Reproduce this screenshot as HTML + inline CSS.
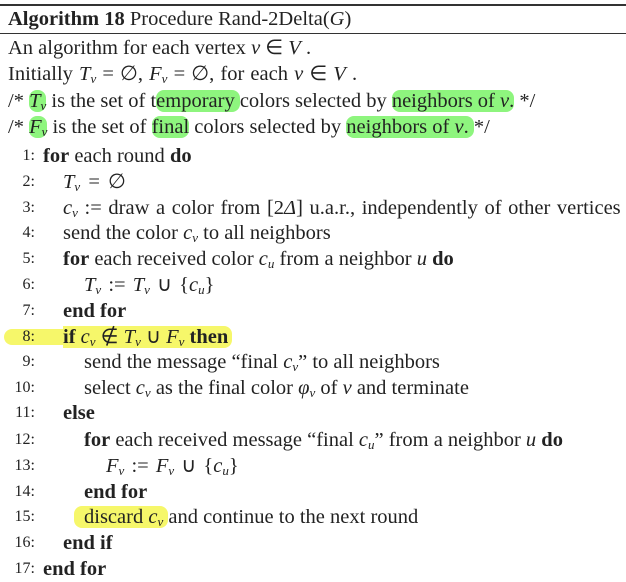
<!DOCTYPE html>
<html><head><meta charset="utf-8"><style>
body{margin:0;width:626px;height:582px;background:#fff;position:relative;overflow:hidden;font-family:"Liberation Serif",serif;font-size:20.5px;color:#222}
.l{position:absolute;height:26px;line-height:26px;white-space:nowrap}
.n{position:absolute;height:26px;line-height:26px;width:35px;text-align:right;font-size:16px;left:0}
i{font-style:italic}
b{font-weight:bold}
sub{font-size:13px;vertical-align:-3px;font-style:italic;line-height:0}
.hr{position:absolute;left:0;width:626px;background:#333}
.g{background:#8ef57e;border-radius:8px}
.y{background:#f6f76a;border-radius:8px}
.yb{position:absolute;background:#f6f76a;border-radius:8px 0 0 8px}
</style></head><body>
<div class="hr" style="top:4px;height:2px"></div>
<div class="hr" style="top:33px;height:1px"></div>
<div class="yb" style="left:4px;top:329px;width:60px;height:16px"></div>
<div class="l" style="left:8px;top:6px"><b>Algorithm 18</b> Procedure Rand-2Delta(<i>G</i>)</div>
<div class="l" style="left:8px;top:35px">An algorithm for each vertex <i>v</i> ∈ <i>V</i> .</div>
<div class="l" style="left:8px;top:61px;word-spacing:1px">Initially <i>T</i><sub>v</sub> = ∅, <i>F</i><sub>v</sub> = ∅, for each <i>v</i> ∈ <i>V</i> .</div>
<div class="l" style="left:8px;top:88px">/* <span class="g"><i>T</i><sub>v</sub></span> is the set of t<span class="g">emporary </span>colors selected by <span class="g">neighbors of <i>v</i>.</span> */</div>
<div class="l" style="left:8px;top:114px">/* <span class="g"><i>F</i><sub>v</sub></span> is the set of <span class="g">final</span> colors selected by <span class="g">neighbors of <i>v</i>. </span>*/</div>

<div class="n" style="top:143px">1:</div><div class="l" style="left:43px;top:143px"><b>for</b> each round <b>do</b></div>
<div class="n" style="top:169px">2:</div><div class="l" style="left:63px;top:169px;word-spacing:3px"><i>T</i><sub>v</sub> = ∅</div>
<div class="n" style="top:195px">3:</div><div class="l" style="left:63px;top:195px;word-spacing:1.5px"><i>c</i><sub>v</sub> := draw a color from [2<i>Δ</i>] u.a.r., independently of other vertices</div>
<div class="n" style="top:220px">4:</div><div class="l" style="left:63px;top:220px">send the color <i>c</i><sub>v</sub> to all neighbors</div>
<div class="n" style="top:246px">5:</div><div class="l" style="left:63px;top:246px"><b>for</b> each received color <i>c</i><sub>u</sub> from a neighbor <i>u</i> <b>do</b></div>
<div class="n" style="top:272px">6:</div><div class="l" style="left:84px;top:272px;word-spacing:2px"><i>T</i><sub>v</sub> := <i>T</i><sub>v</sub> ∪ {<i>c</i><sub>u</sub>}</div>
<div class="n" style="top:298px">7:</div><div class="l" style="left:63px;top:298px"><b>end for</b></div>
<div class="n" style="top:324px">8:</div><div class="l" style="left:63px;top:324px"><span class="y" style="border-radius:0 8px 8px 0;padding-right:4px"><b>if</b> <i>c</i><sub>v</sub> ∉ <i>T</i><sub>v</sub> ∪ <i>F</i><sub>v</sub> <b>then</b></span></div>
<div class="n" style="top:349px">9:</div><div class="l" style="left:84px;top:349px">send the message “final <i>c</i><sub>v</sub>” to all neighbors</div>
<div class="n" style="top:375px">10:</div><div class="l" style="left:84px;top:375px">select <i>c</i><sub>v</sub> as the final color <i>φ</i><sub>v</sub> of <i>v</i> and terminate</div>
<div class="n" style="top:400px">11:</div><div class="l" style="left:63px;top:400px"><b>else</b></div>
<div class="n" style="top:427px">12:</div><div class="l" style="left:84px;top:427px"><b>for</b> each received message “final <i>c</i><sub>u</sub>” from a neighbor <i>u</i> <b>do</b></div>
<div class="n" style="top:453px">13:</div><div class="l" style="left:106px;top:453px;word-spacing:2px"><i>F</i><sub>v</sub> := <i>F</i><sub>v</sub> ∪ {<i>c</i><sub>u</sub>}</div>
<div class="n" style="top:479px">14:</div><div class="l" style="left:84px;top:479px"><b>end for</b></div>
<div class="n" style="top:504px">15:</div><div class="l" style="left:84px;top:504px"><span class="y" style="padding-left:10px;margin-left:-10px">discard <i>c</i><sub>v</sub> </span>and continue to the next round</div>
<div class="n" style="top:530px">16:</div><div class="l" style="left:63px;top:530px"><b>end if</b></div>
<div class="n" style="top:556px">17:</div><div class="l" style="left:43px;top:556px"><b>end for</b></div>
</body></html>
